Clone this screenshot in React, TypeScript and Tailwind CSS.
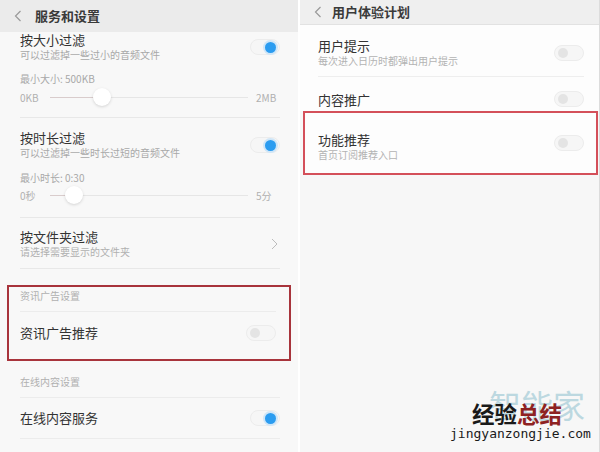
import React from 'react'

const font = { fontFamily: '"Noto Sans CJK SC", "Noto Sans", sans-serif' }

function Toggle({ on }: { on?: boolean }) {
  return (
    <div className="relative h-[16px] w-[30px] rounded-full border border-[#ececec] bg-[#f6f6f6]">
      {on ? (
        <span className="absolute right-[3px] top-[1.5px] h-[11px] w-[11px] rounded-full bg-[#2b9cf0] ring-2 ring-[#cfe6f8]" />
      ) : (
        <span className="absolute left-[3px] top-[2px] h-[10px] w-[10px] rounded-full bg-[#e4e4e4]" />
      )}
    </div>
  )
}

function Back() {
  return (
    <svg width="8" height="12" viewBox="0 0 8 12" className="shrink-0">
      <polyline points="6.5,1 1.5,6 6.5,11" fill="none" stroke="#9a9a9a" strokeWidth="1.2" />
    </svg>
  )
}

function Slider({ left, right, pos }: { left: string; right: string; pos: number }) {
  return (
    <div className="flex h-[20px] items-center text-[10px] text-[#b0b0b0]">
      <span className="w-[28px]">{left}</span>
      <div className="relative mx-[2px] h-[1px] flex-1 bg-[#e6e6e6]">
        <div className="absolute left-0 top-0 h-[1px] bg-[#d9cccc]" style={{ width: pos }} />
        <span
          className="absolute top-[-9px] h-[18px] w-[18px] rounded-full bg-white shadow-[0_1px_3px_rgba(0,0,0,0.15)]"
          style={{ left: pos - 9 }}
        />
      </div>
      <span className="w-[30px] pl-[6px]">{right}</span>
    </div>
  )
}

export default function App() {
  return (
    <div className="relative flex h-[452px] w-[600px] overflow-hidden bg-white" style={font}>
      {/* left phone */}
      <div className="flex w-[298px] flex-col bg-[#f8f8f8]">
        <div className="flex h-[32px] items-center gap-[13px] bg-[#ebebeb] pl-[14px]">
          <Back />
          <span className="text-[13px] font-semibold text-[#3a3a3a]">服务和设置</span>
        </div>

        <div className="px-[20px] pr-[18px]">
          {/* 按大小过滤 */}
          <div className="border-b border-[#e8e8e8] pb-[10px]">
            <div className="flex items-center justify-between">
              <div>
                <div className="h-[15px] text-[13px] leading-[15px] text-[#333]">按大小过滤</div>
                <div className="mt-[1px] h-[14px] text-[10px] leading-[14px] text-[#a8a8a8]">可以过滤掉一些过小的音频文件</div>
              </div>
              <Toggle on />
            </div>
            <div className="mt-[10px] h-[14px] text-[10px] leading-[14px] text-[#a8a8a8]">最小大小: 500KB</div>
            <div className="mt-[1px]">
              <Slider left="0KB" right="2MB" pos={52} />
            </div>
          </div>

          {/* 按时长过滤 */}
          <div className="border-b border-[#e8e8e8] pb-[12px] pt-[12px]">
            <div className="flex items-center justify-between">
              <div>
                <div className="h-[15px] text-[13px] leading-[15px] text-[#333]">按时长过滤</div>
                <div className="mt-[1px] h-[14px] text-[10px] leading-[14px] text-[#a8a8a8]">可以过滤掉一些时长过短的音频文件</div>
              </div>
              <Toggle on />
            </div>
            <div className="mt-[11px] h-[14px] text-[10px] leading-[14px] text-[#a8a8a8]">最小时长: 0:30</div>
            <Slider left="0秒" right="5分" pos={24} />
          </div>

          {/* 按文件夹过滤 */}
          <div className="flex items-center justify-between border-b border-[#e8e8e8] pb-[9px] pt-[11px]">
            <div>
              <div className="h-[15px] text-[13px] leading-[15px] text-[#333]">按文件夹过滤</div>
              <div className="mt-[1px] h-[14px] text-[10px] leading-[14px] text-[#b0b0b0]">请选择需要显示的文件夹</div>
            </div>
            <svg width="7" height="12" viewBox="0 0 7 12" className="mr-[2px]">
              <polyline points="1,1 6,6 1,11" fill="none" stroke="#bdbdbd" strokeWidth="1" />
            </svg>
          </div>
        </div>

        {/* 资讯广告设置 */}
        <div className="mx-[7px] mt-[16px] border-2 border-[#a8343c] px-[11px] pr-[13px] pt-[2px]">
          <div className="h-[14px] text-[10px] leading-[14px] text-[#b0b0b0]">资讯广告设置</div>
          <div className="mt-[8px] flex h-[42px] items-center justify-between border-t border-[#ececec]">
            <span className="text-[13px] text-[#333]">资讯广告推荐</span>
            <Toggle />
          </div>
          <div className="h-[6px]" />
        </div>

        <div className="px-[20px] pr-[18px]">
          <div className="mt-[14px] h-[14px] text-[10px] leading-[14px] text-[#b0b0b0]">在线内容设置</div>
          <div className="mt-[8px] flex h-[42px] items-center justify-between border-y border-[#ececec]">
            <span className="text-[13px] text-[#333]">在线内容服务</span>
            <Toggle on />
          </div>
        </div>
      </div>

      <div className="w-[2px] bg-white" />

      {/* right phone */}
      <div className="flex flex-1 flex-col border-r border-[#dcdcdc] bg-[#f7f7f7]">
        <div className="flex h-[25px] items-center gap-[10px] border-b border-[#e2e2e2] bg-[#efefef] pl-[14px]">
          <Back />
          <span className="text-[13px] font-semibold text-[#3a3a3a]">用户体验计划</span>
        </div>

        <div className="bg-[#fdfdfd]">
          <div className="mx-[18px] mr-[15px] flex items-center justify-between border-b border-[#eeeeee] pb-[8px] pt-[13px]">
            <div>
              <div className="h-[15px] text-[13px] leading-[15px] text-[#333]">用户提示</div>
              <div className="mt-[1px] h-[14px] text-[10px] leading-[14px] text-[#b3b3b3]">每次进入日历时都弹出用户提示</div>
            </div>
            <Toggle />
          </div>
          <div className="mx-[18px] mr-[15px] flex h-[34px] items-end justify-between pb-[4px]">
            <span className="h-[15px] text-[13px] leading-[15px] text-[#333]">内容推广</span>
            <Toggle />
          </div>
        </div>

        <div className="mx-[3px] mr-[1px] flex h-[64px] items-center justify-between border-2 border-[#d4505a] bg-[#fdfdfd] pl-[13px] pr-[12px]">
          <div className="pt-[7px]">
            <div className="h-[15px] text-[13px] leading-[15px] text-[#333]">功能推荐</div>
            <div className="mt-[1px] h-[14px] text-[10px] leading-[14px] text-[#b3b3b3]">首页订阅推荐入口</div>
          </div>
          <Toggle />
        </div>
      </div>

      {/* watermark overlay */}
      <div className="absolute left-[440px] top-[380px] h-[72px] w-[160px]">
        <span className="absolute left-[49px] top-[8px] whitespace-nowrap text-[32px] leading-[32px] text-[#bcd8e0]">
          智能家
        </span>
        <span className="absolute left-[32px] top-[21px] whitespace-nowrap text-[22.5px] font-bold leading-[24px] text-[#1a1a1a]">
          经验<span className="text-[#8e2222]">总结</span>
        </span>
        <span
          className="absolute left-[10px] top-[46px] whitespace-nowrap text-[13px] leading-[15px] text-[#1a1a1a]"
          style={{ fontFamily: '"DejaVu Sans Mono", monospace' }}
        >
          jingyanzongjie.com
        </span>
      </div>
    </div>
  )
}
